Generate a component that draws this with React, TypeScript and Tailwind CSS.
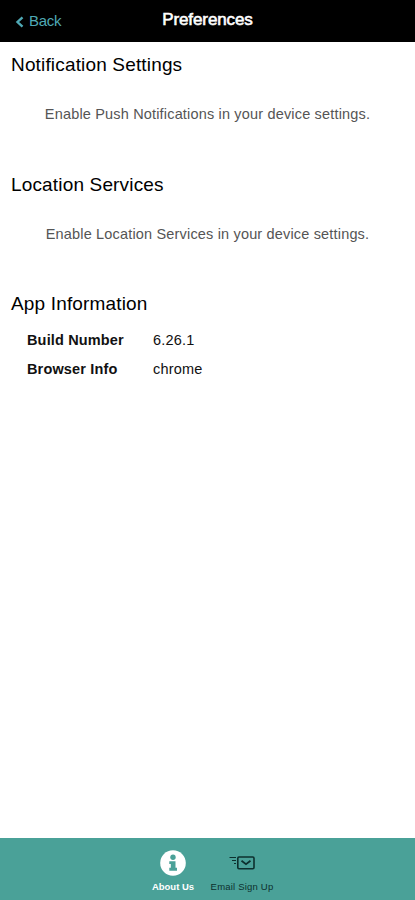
import type { ReactNode } from 'react';

function Header() {
  return (
    <header className="grid h-[42px] shrink-0 grid-cols-3 items-center bg-black pb-[2px]">
      <button className="flex items-center pl-[15px] text-left text-[#4fa9b5]">
        <svg width="9" height="12" viewBox="0 0 9 12" fill="none" className="mt-1">
          <path d="M7.500 1.300 2.500 6l5 4.700" stroke="currentColor" strokeWidth="2.400" />
        </svg>
        <span className="mt-[2px] ml-[5px] text-[15px] leading-5 tracking-[-0.3px]">Back</span>
      </button>
      <h1 className="text-center text-[17px] leading-5 tracking-[-0.1px] text-white [-webkit-text-stroke:0.6px]">
        Preferences
      </h1>
    </header>
  );
}

function Section({ title, children }: { title: string; children: ReactNode }) {
  return (
    <section>
      <h2 className="pl-[11px] text-[19px] leading-6 tracking-[0.16px] text-black">{title}</h2>
      {children}
    </section>
  );
}

function InfoRow({ label, value }: { label: string; value: string }) {
  return (
    <div className="flex h-[29px] items-center text-[14.500px] text-[#111]">
      <dt className="w-[126px] font-bold tracking-[0.15px]">{label}</dt>
      <dd className="tracking-[0.2px]">{value}</dd>
    </div>
  );
}

function Footer() {
  return (
    <nav className="flex h-[62px] shrink-0 justify-center bg-[#4aa198]">
      {/* About Us */}
      <button className="flex w-[69px] flex-col items-center pt-3 text-white">
        <svg width="26" height="26" viewBox="0 0 26 26">
          <circle cx="13" cy="13" r="12.800" fill="currentColor" />
          <circle cx="13" cy="7.300" r="2.700" fill="#4aa198" />
          <path d="M9.300 11.200h6.200v6.600h1.500v3H9.300v-3h1.500v-3.800H9.300z" fill="#4aa198" />
        </svg>
        <span className="mt-[5px] text-[9.500px] leading-3 font-bold whitespace-nowrap">
          About Us
        </span>
      </button>

      {/* Email Sign Up */}
      <button className="flex w-[69px] flex-col items-center pt-3 text-[#0d302e]">
        <svg width="26" height="26" viewBox="0 0 26 26" fill="none" stroke="currentColor">
          <rect x="8.800" y="7" width="16.200" height="11.800" rx="1.200" strokeWidth="1.600" />
          <path d="m12.500 10.800 4.500 3.400 4.500-3.400" strokeWidth="1.800" />
          <path d="M0.500 7.500H7M3 10.500h4M5 13.500h2" strokeWidth="1" />
        </svg>
        <span className="mt-[5px] text-[9.500px] leading-3 tracking-[0.2px] whitespace-nowrap">
          Email Sign Up
        </span>
      </button>
    </nav>
  );
}

export default function App() {
  return (
    <div className="flex h-screen flex-col bg-white font-['Liberation_Sans',Arial,sans-serif]">
      <Header />

      <main className="flex-1 pt-[11px]">
        <Section title="Notification Settings">
          <p className="pt-[27px] pb-[49px] text-center text-[14.500px] leading-5 tracking-[0.17px] text-[#555]">
            Enable Push Notifications in your device settings.
          </p>
        </Section>

        <Section title="Location Services">
          <p className="pt-[27px] pb-12 text-center text-[14.500px] leading-5 tracking-[0.17px] text-[#555]">
            Enable Location Services in your device settings.
          </p>
        </Section>

        <Section title="App Information">
          <dl className="pt-[10px] pl-[27px]">
            <InfoRow label="Build Number" value="6.26.1" />
            <InfoRow label="Browser Info" value="chrome" />
          </dl>
        </Section>
      </main>

      <Footer />
    </div>
  );
}
